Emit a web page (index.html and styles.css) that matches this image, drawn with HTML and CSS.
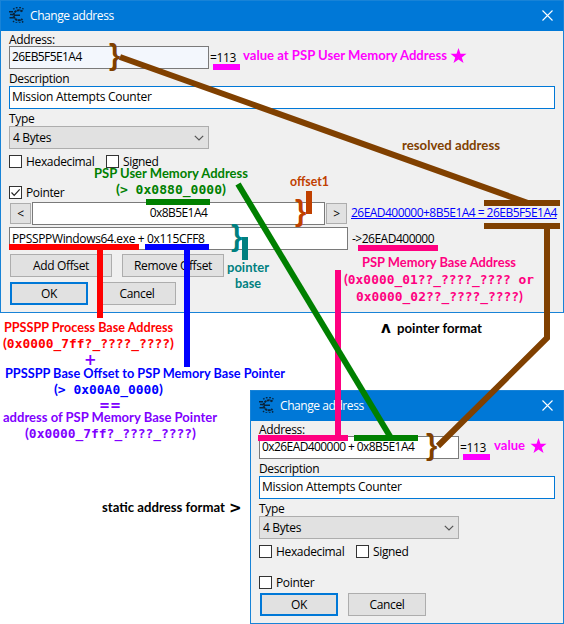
FILE: index.html
```
<!DOCTYPE html>
<html lang="en">
<head>
<meta charset="utf-8">
<title>Change address</title>
<link rel="stylesheet" href="styles.css">
</head>
<body>
<svg class="defs" width="0" height="0">
  <symbol id="logo" viewBox="0 0 16 16">
    <g fill="none" stroke="#08243c">
      <path d="M13.500 4.600A5.300 5 0 1 0 13.500 12" stroke-width="2" stroke-dasharray="2.600 .5"/>
      <path d="M14.500 2.200A7.500 7 0 0 0 4 2.500M4 14A7.500 7 0 0 0 14.500 14.200" stroke-width="1.500" stroke-dasharray="1.600 1.500"/>
      <path d="M0 4.800h4M1 7.500h3M5 8.200h6M0.500 10.800h4" stroke-width="1.400"/>
    </g>
  </symbol>
</svg>
<main class="canvas">
  <section class="dialog first">
    <header class="titlebar"><svg class="logo"><use href="#logo"/></svg><h1>Change address</h1><svg class="close" viewBox="0 0 11 11"><path d="M.5.5l10 10M10.5.5l-10 10"/></svg></header>
    <div class="content">
      <div class="label">Address:</div>
      <div class="row"><div class="field half tinted hexval">26EB5F5E1A4</div><span class="result">=113</span></div>
      <div class="label next">Description</div>
      <div class="field focus">Mission Attempts Counter</div>
      <div class="label next">Type</div>
      <div class="select">4 Bytes<svg viewBox="0 0 10 6"><path d="M.8.8L5 5 9.2.8"/></svg></div>
      <div class="checks"><span class="check hex"><i></i>Hexadecimal</span><span class="check"><i></i>Signed</span></div>
      <div class="checks pointer"><span class="check"><i><svg viewBox="0 0 11 11"><path d="M1.5 5.5L4.2 8.3 9.7 2.3"/></svg></i>Pointer</span></div>
      <div class="row offset"><button class="step">&lt;</button><div class="field center hexval">0x8B5E1A4</div><button class="step">&gt;</button><a class="link">26EAD400000+8B5E1A4 = 26EB5F5E1A4</a></div>
      <div class="row base"><div class="field">PPSSPPWindows64.exe + 0x115CFF8</div><span class="target">-&gt;26EAD400000</span></div>
      <div class="buttons"><button class="wide">Add Offset</button><button class="wide">Remove Offset</button></div>
      <div class="buttons last"><button class="ok">OK</button><button>Cancel</button></div>
    </div>
  </section>
  <section class="dialog second">
    <header class="titlebar"><svg class="logo"><use href="#logo"/></svg><h1>Change address</h1><svg class="close" viewBox="0 0 11 11"><path d="M.5.5l10 10M10.5.5l-10 10"/></svg></header>
    <div class="content">
      <div class="label">Address:</div>
      <div class="row"><div class="field half hexval">0x26EAD400000 + 0x8B5E1A4</div><span class="result">=113</span></div>
      <div class="label next">Description</div>
      <div class="field focus">Mission Attempts Counter</div>
      <div class="label next">Type</div>
      <div class="select">4 Bytes<svg viewBox="0 0 10 6"><path d="M.8.8L5 5 9.2.8"/></svg></div>
      <div class="checks"><span class="check hex"><i></i>Hexadecimal</span><span class="check"><i></i>Signed</span></div>
      <div class="checks pointer"><span class="check"><i></i>Pointer</span></div>
      <div class="buttons"><button class="ok">OK</button><button>Cancel</button></div>
    </div>
  </section>
  <svg class="notes" viewBox="0 0 564 624" width="564" height="624">
    <g class="magenta">
      <path d="M213 64h27v6h-27zM463 454h27v6h-27z"/>
      <path id="star" d="M458.500 48l2 5.700h6l-4.700 3.700 1.700 5.700-5-3.500-5 3.500 1.700-5.700-4.700-3.700h6z"/>
      <use href="#star" x="80" y="390"/>
      <text x="243" y="60" textLength="204" lengthAdjust="spacingAndGlyphs">value at PSP User Memory Address</text>
      <text x="494" y="450" textLength="31" lengthAdjust="spacingAndGlyphs">value</text>
    </g>
    <g class="red">
      <path d="M9 244h130v6H103v68h-6v-68H9z"/>
      <text x="4" y="332" textLength="169" lengthAdjust="spacingAndGlyphs">PPSSPP Process Base Address</text>
      <text x="3" y="348" textLength="171" lengthAdjust="spacingAndGlyphs">(<tspan class="mono">0x0000_7ff?_????_????</tspan>)</text>
    </g>
    <g class="blue">
      <path d="M145 244h64v6h-19v117h-6V250h-39z"/>
      <text x="5" y="378" textLength="280" lengthAdjust="spacingAndGlyphs">PPSSPP Base Offset to PSP Memory Base Pointer</text>
      <text x="54" y="394" textLength="109" lengthAdjust="spacingAndGlyphs">(<tspan class="mono">&gt; 0x00A0_0000</tspan>)</text>
    </g>
    <g class="violet">
      <text class="sign" x="84" y="365">+</text>
      <text class="sign" x="99" y="410" textLength="22" lengthAdjust="spacingAndGlyphs">==</text>
      <text x="3" y="422" textLength="214" lengthAdjust="spacingAndGlyphs">address of PSP Memory Base Pointer</text>
      <text x="25" y="438" textLength="171" lengthAdjust="spacingAndGlyphs">(<tspan class="mono">0x0000_7ff?_????_????</tspan>)</text>
    </g>
    <g class="pink">
      <path d="M358 245h80v6h-80zM335 270h6v165h7v6h-90v-6h77z"/>
      <text x="362" y="267" textLength="154" lengthAdjust="spacingAndGlyphs">PSP Memory Base Address</text>
      <text x="344" y="284" textLength="190" lengthAdjust="spacingAndGlyphs">(<tspan class="mono">0x0000_01??_????_???? or</tspan></text>
      <text x="356" y="301" textLength="167" lengthAdjust="spacingAndGlyphs"><tspan class="mono">0x0000_02??_????_????</tspan>)</text>
    </g>
    <g class="green">
      <path d="M146 199h64v6h-64zM354 435h64v6h-64z"/>
      <path class="line" d="M238 184L391 438"/>
      <text x="94" y="178" textLength="154" lengthAdjust="spacingAndGlyphs">PSP User Memory Address</text>
      <text x="116" y="194" textLength="110" lengthAdjust="spacingAndGlyphs">(<tspan class="mono">&gt; 0x0880_0000</tspan>)</text>
    </g>
    <g class="brown">
      <path d="M484 200h76v6h-76zM484 223h76v6h-76z"/>
      <path class="line" d="M120 57L528 203M547 228v110L438 446"/>
      <text class="brace" x="109" y="65">}</text>
      <text class="brace" x="426" y="455">}</text>
      <text x="402" y="150" textLength="98" lengthAdjust="spacingAndGlyphs">resolved address</text>
    </g>
    <g class="orange">
      <path d="M306 191h6v23h-6z"/>
      <text class="brace" x="295" y="221">}</text>
      <text x="290" y="186" textLength="39" lengthAdjust="spacingAndGlyphs">offset1</text>
    </g>
    <g class="teal">
      <path d="M242 237h6v23h-6z"/>
      <text class="brace" x="231" y="246">}</text>
      <text x="227" y="272" textLength="42" lengthAdjust="spacingAndGlyphs">pointer</text>
      <text x="235" y="288" textLength="26" lengthAdjust="spacingAndGlyphs">base</text>
    </g>
    <g class="black">
      <text class="sign" x="381" y="333">ʌ</text>
      <text class="sign" x="229" y="513">&gt;</text>
      <text x="397" y="333" textLength="85" lengthAdjust="spacingAndGlyphs">pointer format</text>
      <text x="102" y="512" textLength="123" lengthAdjust="spacingAndGlyphs">static address format</text>
    </g>
  </svg>
</main>
</body>
</html>
```
FILE: styles.css
```
* { box-sizing: border-box; }
body { margin: 0; background: #fff; font: 12px/14px "Open Sans", sans-serif; letter-spacing: -0.35px; color: #000; }
.defs { display: block; }
.canvas { position: relative; width: 564px; height: 624px; overflow: hidden; }
.dialog { border: 1px solid #1883d7; background: #f0f0f0; }
.first { height: 313px; }
.second { height: 234px; margin: 77px 0 0 250px; }
.titlebar { display: flex; align-items: center; height: 30px; padding: 0 10px 0 8px; background: #0078d7; color: #fff; }
.titlebar h1 { flex: 1; margin: 0 0 0 5px; font-size: 12px; font-weight: 400; letter-spacing: -0.43px; }
.logo { width: 16px; height: 16px; margin-bottom: 2px; }
.close { width: 11px; height: 11px; margin-bottom: 2px; fill: none; stroke: #fff; stroke-width: 1.1; }
.content { padding: 0 8px; }
.label { height: 15px; line-height: 17px; }
.label.next { height: 17px; line-height: 20px; }
.row { display: flex; }
.field { flex: none; height: 23px; border: 1px solid #7a7a7a; background: #fff; padding: 0 2px; line-height: 20px; white-space: nowrap; }
.half { width: 200px; }
.hexval { letter-spacing: -0.58px; }
.tinted { background: #f3f7fd; }
.focus { width: 546px; border-color: #0078d7; letter-spacing: -0.26px; }
.second .focus { width: 296px; }
.result { margin-left: 1px; line-height: 23px; }
.select { display: flex; align-items: center; justify-content: space-between; width: 200px; height: 23px; border: 1px solid #adadad; background: #e1e1e1; padding: 0 4px 0 3px; }
.select svg { width: 10px; height: 6px; fill: none; stroke: #555; stroke-width: 1.2; }
.checks { display: flex; height: 13px; margin-top: 6px; }
.checks.pointer { margin-top: 18px; }
.check { display: flex; align-items: center; gap: 4px; }
.check.hex { width: 97px; }
.check i { display: block; width: 13px; height: 13px; border: 1px solid #333; background: #fff; }
.check svg { display: block; width: 11px; height: 11px; fill: none; stroke: #222; stroke-width: 1.2; }
.offset { margin-top: 3px; }
.offset .field { width: 293px; margin: 0 1px; text-align: center; }
.link { margin-left: 4px; line-height: 22px; color: #00f; letter-spacing: -0.53px; text-decoration: underline; white-space: nowrap; }
.base { margin-top: 2px; }
.base .field { width: 339px; line-height: 21px; }
.target { margin-left: 4px; line-height: 23px; letter-spacing: -0.5px; }
.buttons { display: flex; gap: 10px; margin: 4px 0 0 1px; }
.buttons.last { margin-top: 5px; }
button { flex: none; width: 78px; height: 23px; padding: 0; border: 1px solid #adadad; background: #e1e1e1; font: inherit; letter-spacing: inherit; color: #000; }
button.wide { width: 102px; }
button.ok { border: 2px solid #0078d7; }
button.step { width: 21px; height: 21px; margin: 1px 0 0 1px; }
.field + button.step { margin-left: 0; }
.notes { position: absolute; left: 0; top: 0; font: 700 14px Lato, sans-serif; letter-spacing: 0; }
.notes text { white-space: pre; }
.mono { font: 700 12.800px "DejaVu Sans Mono", monospace; }
.brace { font: 700 29px "Liberation Sans", sans-serif; }
.sign { font: 700 15px "DejaVu Sans", sans-serif; }
.line { fill: none; stroke: currentColor; stroke-width: 6; }
.magenta { fill: #f0f; }
.red { fill: #f00; }
.blue { fill: #00f; }
.violet { fill: #8000ff; }
.pink { fill: #ff0080; }
.green { fill: #008000; color: #008000; }
.brown { fill: #804000; color: #804000; }
.orange { fill: #c04000; }
.teal { fill: #008080; }
```
